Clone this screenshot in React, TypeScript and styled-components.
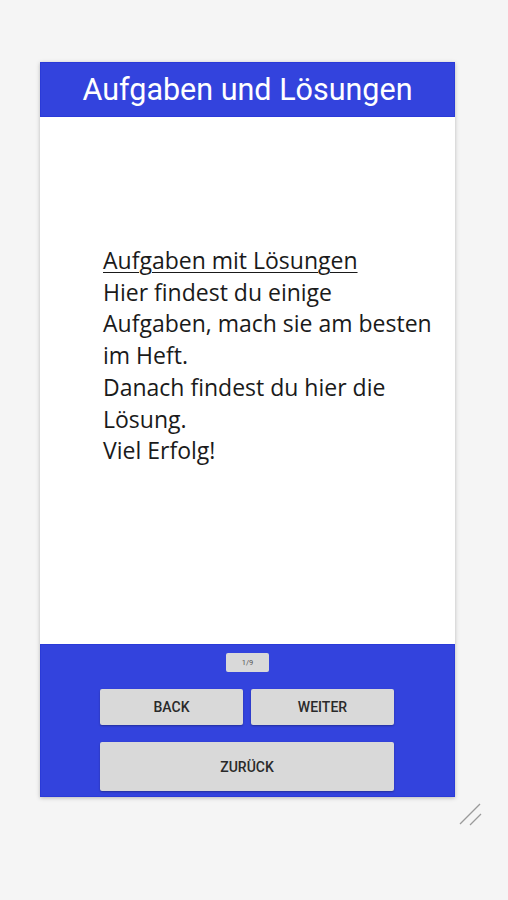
import React from "react";
import styled, { createGlobalStyle } from "styled-components";

const Global = createGlobalStyle`
  html, body { margin: 0; padding: 0; background: #f5f5f5; }
  body { font-family: Roboto, "Liberation Sans", sans-serif; }
`;

const Page = styled.div`
  width: 508px;
  height: 900px;
  padding-top: 62px;
  box-sizing: border-box;
  position: relative;
`;

const Frame = styled.div`
  margin-left: 40px;
  width: 415px;
  height: 735px;
  display: flex;
  flex-direction: column;
  box-shadow: 0 1px 4px rgba(0, 0, 0, 0.25);
  background: #fff;
`;

const Header = styled.div`
  height: 55px;
  background: #3343dd;
  border: 1px solid #2a3ad8;
  box-sizing: border-box;
  display: flex;
  align-items: center;
  justify-content: center;
  color: #fff;
  font-family: Roboto, sans-serif;
  font-size: 30.5px;
`;

const Body = styled.div`
  flex: 1;
  padding: 128px 14px 0 63px;
  font-family: "Open Sans", "Noto Sans", sans-serif;
  font-size: 23px;
  line-height: 31.7px;
  color: #1a1a1a;
`;

const Title = styled.div`
  text-decoration: underline;
  text-underline-offset: 3px;
  text-decoration-thickness: 1px;
`;

const Footer = styled.div`
  height: 153px;
  background: #3343dd;
  border: 1px solid #2a3ad8;
  box-sizing: border-box;
  display: flex;
  flex-direction: column;
  align-items: center;
  padding-top: 8px;
`;

const Pill = styled.div`
  width: 43px;
  height: 19px;
  background: #d9d9d9;
  border-radius: 2px;
  font-size: 7.5px;
  color: #555;
  display: flex;
  align-items: center;
  justify-content: center;
`;

const Grid = styled.div`
  margin-top: 17px;
  margin-right: 1px;
  display: grid;
  grid-template-columns: 143px 143px;
  column-gap: 8px;
  row-gap: 17px;
`;

const Btn = styled.div<{ $wide?: boolean; $tall?: boolean }>`
  grid-column: ${(p) => (p.$wide ? "1 / 3" : "auto")};
  height: ${(p) => (p.$tall ? "49px" : "36px")};
  background: #d9d9d9;
  border-radius: 2px;
  box-shadow: 0 1px 2px rgba(0, 0, 0, 0.3);
  display: flex;
  align-items: center;
  justify-content: center;
  font-family: Roboto, sans-serif;
  font-weight: 500;
  font-size: 14px;
  color: #2a2a2a;
`;

const Grip = styled.svg`
  position: absolute;
  left: 458px;
  top: 801px;
`;

export default function App() {
  return (
    <Page>
      <Global />
      <Frame>
        <Header>Aufgaben und Lösungen</Header>
        <Body>
          <Title>Aufgaben mit Lösungen</Title>
          <div>Hier findest du einige Aufgaben, mach sie am besten im Heft.</div>
          <div>Danach findest du hier die Lösung.</div>
          <div>Viel Erfolg!</div>
        </Body>
        <Footer>
          <Pill>1/9</Pill>
          <Grid>
            <Btn>BACK</Btn>
            <Btn>WEITER</Btn>
            <Btn $wide $tall>ZURÜCK</Btn>
          </Grid>
        </Footer>
      </Frame>
      <Grip width="26" height="26" viewBox="0 0 26 26">
        <line x1="2" y1="23" x2="22" y2="3" stroke="#9a9a9a" strokeWidth="1.3" />
        <line x1="12" y1="24" x2="23" y2="13" stroke="#9a9a9a" strokeWidth="1.3" />
      </Grip>
    </Page>
  );
}
